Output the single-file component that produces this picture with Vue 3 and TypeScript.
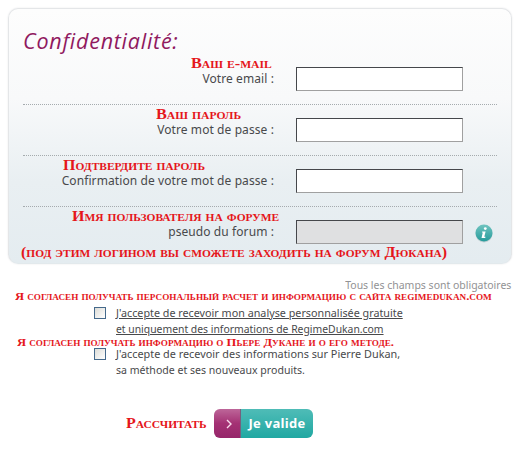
<script setup lang="ts">
interface Field {
  id: string
  note: string
  label: string
  type: string
  disabled?: boolean
}

const fields: Field[] = [
  { id: 'email', note: 'Ваш e-mail', label: 'Votre email :', type: 'text' },
  { id: 'password', note: 'Ваш пароль', label: 'Votre mot de passe :', type: 'password' },
  { id: 'confirm', note: 'Подтвердите пароль', label: 'Confirmation de votre mot de passe :', type: 'password' },
  { id: 'pseudo', note: 'Имя пользователя на форуме', label: 'pseudo du forum :', type: 'text', disabled: true },
]
</script>

<template>
  <form class="page" @submit.prevent>
    <section class="card">
      <h1><span>Confidentialité:</span></h1>
      <div v-for="f in fields" :key="f.id" class="row" :class="f.id">
        <div class="caption">
          <div class="note"><span>{{ f.note }}</span></div>
          <label :for="f.id"><span>{{ f.label }}</span></label>
        </div>
        <input :id="f.id" :type="f.type" :disabled="f.disabled" />
        <svg v-if="f.disabled" class="info" viewBox="0 0 18 19" width="18" height="19">
          <defs>
            <linearGradient id="infoFill" x1="0" y1="0" x2="0" y2="1">
              <stop offset="0" stop-color="#70c4c0" />
              <stop offset="1" stop-color="#259b9b" />
            </linearGradient>
          </defs>
          <ellipse cx="9" cy="10" rx="8.5" ry="8.5" fill="#bfcfd2" />
          <circle cx="9" cy="9" r="8.5" fill="url(#infoFill)" />
          <circle cx="10.3" cy="4.6" r="1.4" fill="#fff" />
          <path d="M7.2 7.4H10.6L9.3 12.8H10.5L10.2 14H6.5L7.8 8.6H6.9Z" fill="#fff" />
        </svg>
      </div>
      <div class="note hint"><span>(под этим логином вы сможете заходить на форум Дюкана)</span></div>
    </section>

    <p class="required"><span>Tous les champs sont obligatoires</span></p>

    <div class="note small first"><span>Я согласен получать персональный расчет и информацию с сайта regimedukan.com</span></div>
    <div class="consent linked">
      <input id="analysis" type="checkbox" />
      <label for="analysis">
        <span class="l1">J'accepte de recevoir mon analyse personnalisée gratuite</span>
        <span class="l2">et uniquement des informations de RegimeDukan.com</span>
      </label>
    </div>
    <div class="note small second"><span>Я согласен получать информацию о Пьере Дукане и о его методе.</span></div>
    <div class="consent">
      <input id="news" type="checkbox" />
      <label for="news">
        <span class="l3">J'accepte de recevoir des informations sur Pierre Dukan,</span>
        <span class="l4">sa méthode et ses nouveaux produits.</span>
      </label>
    </div>

    <div class="actions">
      <div class="note"><span>Рассчитать</span></div>
      <button type="submit">
        <i><svg viewBox="0 0 6 10" width="6" height="10"><path d="M1 1L5 5L1 9" fill="none" stroke="#f8dcec" stroke-width="1.4" /></svg></i>
        <b><span>Je valide</span></b>
      </button>
    </div>
  </form>
</template>

<style>
body { background: #fff; }
</style>

<style scoped>
* { box-sizing: border-box; }
.page {
  width: 520px;
  height: 450px;
  padding: 8px 8px 0;
  overflow: hidden;
  color: #48494b;
  font: 12px/16px "Noto Sans", sans-serif;
  white-space: nowrap;
}
.card {
  width: 504px;
  height: 256px;
  padding: 0 14px 0 14px;
  border: 1px solid #e4e6e8;
  border-bottom-color: #e2e9ec;
  border-radius: 10px;
  background: linear-gradient(#fdfdfd, #f8f9fa 35%, #e9eff2 68%, #e4ecf0);
  box-shadow: 0 0 2px #e6e6e8;
}
h1 {
  height: 45px;
  margin: 0;
  padding-top: 17px;
  color: #90195f;
  font: italic 400 21.5px/30px "Open Sans", sans-serif;
  letter-spacing: 0.75px;
}
.row {
  display: flex;
  height: 51px;
  border-bottom: 1px dotted #a5abae;
}
.row.pseudo { height: 39px; border: 0; }
.caption { width: 251px; margin-right: 22px; }
.note {
  color: #e5161b;
  font: bold 14px/16px "Liberation Serif", serif;
  font-variant: small-caps;
}
.note span {
  display: inline-block;
  transform: scaleX(1.145);
  transform-origin: 0 50%;
}
.email .note span, .password .note span { transform: scaleX(1.16); }
.caption .note { height: 15px; margin-top: 2px; }
.email .note { padding-left: 168px; }
.password .note { padding-left: 133px; }
.confirm .note { padding-left: 40px; }
.pseudo .note { padding-left: 49px; }
.caption label {
  display: block;
  height: 16px;
  text-align: right;
  letter-spacing: 0.09px;
}
.row input {
  width: 167px;
  height: 24px;
  margin: 13px 0 0;
  padding: 1px 4px;
  border: 1px solid #a0a0a0;
  border-top-color: #45474b;
  border-left-color: #45474b;
  background: #fff;
}
.row input:disabled { background: #dfe0e1; }
.info { margin: 17px 0 0 12px; }
.hint { margin: -1px 0 0 -2px; }
.hint span { transform: scaleX(1.14); }
.required {
  height: 16px;
  margin: 13px 1px 0 0;
  color: #929294;
  font-size: 11px;
  text-align: right;
}
.required span {
  display: inline-block;
  transform: scaleX(0.953);
  transform-origin: 100% 50%;
}
.small { height: 11px; font-size: 11px; line-height: 11px; }
.first { margin: -2px 0 0 7px; }
.second { margin: 0 0 0 9px; }
.consent { display: flex; height: 32px; margin-left: 86px; font-size: 11px; }
.first + .consent { margin-top: 3px; }
.second + .consent { margin-top: -2px; }
.consent label { display: flex; flex-direction: column; align-items: flex-start; }
.consent label span { transform-origin: 0 50%; }
.l1 { transform: scaleX(0.979); }
.l2 { transform: scaleX(0.943); }
.l3 { transform: scaleX(0.986); }
.l4 { transform: scaleX(0.96); }
.consent input {
  appearance: none;
  width: 12px;
  height: 12px;
  margin: 2px 10px 0 0;
  border: 1px solid #45698b;
  background: linear-gradient(135deg, #dcdcd7, #fff);
}
.linked span { text-decoration: underline; }
.actions { display: flex; margin: 31px 0 0 118px; height: 29px; }
.actions .note { width: 88px; padding-top: 7px; }
button {
  display: flex;
  width: 99px;
  height: 29px;
  padding: 0;
  overflow: hidden;
  border: 0;
  border-radius: 6px;
  color: #fff;
}
button i {
  display: flex;
  align-items: center;
  justify-content: center;
  width: 27px;
  height: 29px;
  padding-left: 3px;
  background: linear-gradient(#bd6699, #a43174 50%, #96266a);
  border-right: 1px solid #74617e;
}
button b {
  width: 72px;
  height: 29px;
  background: linear-gradient(#4fbcb7, #20a8a2);
  font: bold 13px/29px "Open Sans", sans-serif;
  letter-spacing: 0.3px;
}
</style>
